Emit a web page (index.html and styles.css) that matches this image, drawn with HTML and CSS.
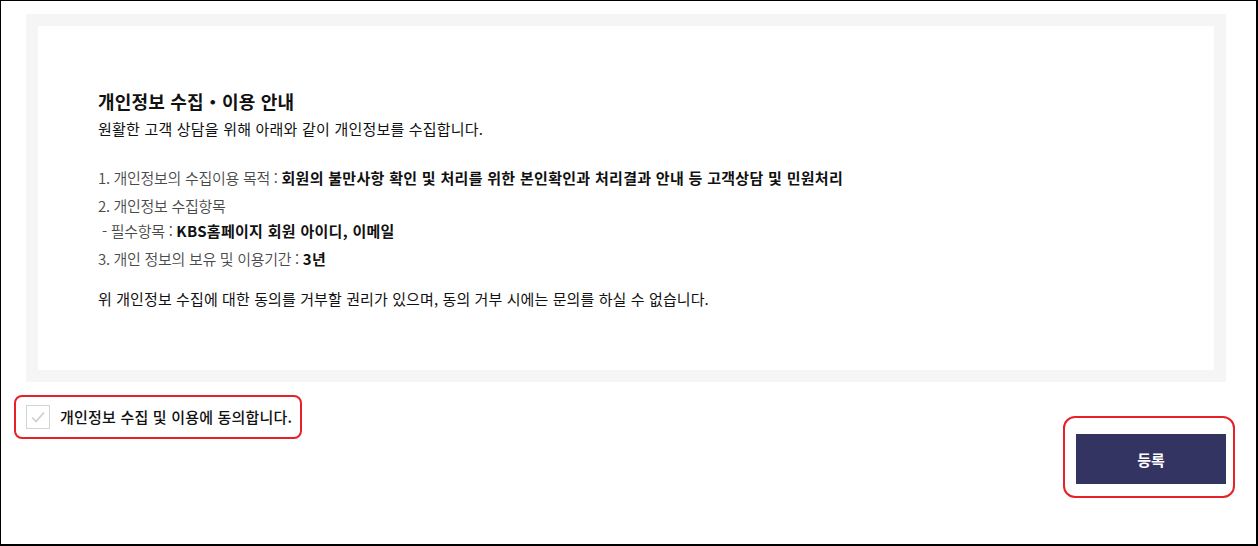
FILE: index.html
```html
<!DOCTYPE html>
<html lang="ko">

<head>
    <meta charset="UTF-8">
    <meta name="viewport" content="width=device-width, initial-scale=1.0">
    <link rel="stylesheet" href="styles.css">
    <title>개인정보 수집 이용 동의</title>
</head>

<body>
    <div class="page">
        <!-- 안내 박스 -->
        <div class="agree-box">
            <div class="agree-inner">
                <h2 class="agree-title">개인정보 수집・이용 안내</h2>
                <p class="agree-sub">원활한 고객 상담을 위해 아래와 같이 개인정보를 수집합니다.</p>

                <ul class="agree-list">
                    <li>1. 개인정보의 수집이용 목적 : <strong>회원의 불만사항 확인 및 처리를 위한 본인확인과 처리결과 안내 등 고객상담 및 민원처리</strong></li>
                    <li>2. 개인정보 수집항목<br><span class="sub-item">- 필수항목 : <strong>KBS홈페이지 회원 아이디, 이메일</strong></span></li>
                    <li>3. 개인 정보의 보유 및 이용기간 : <strong>3년</strong></li>
                </ul>

                <p class="agree-note">위 개인정보 수집에 대한 동의를 거부할 권리가 있으며, 동의 거부 시에는 문의를 하실 수 없습니다.</p>
            </div>
        </div>

        <div class="bottom-row">
            <label class="check-wrap">
                <span class="check-box">
                    <svg width="16" height="16" viewBox="0 0 16 16">
                        <polyline points="2,8.5 6,12.5 14,3.5" fill="none" stroke="#cfcfcf" stroke-width="1.6"/>
                    </svg>
                </span>
                <span class="check-text">개인정보 수집 및 이용에 동의합니다.</span>
            </label>

            <div class="btn-wrap">
                <button type="button" class="btn-submit">등록</button>
            </div>
        </div>
    </div>
</body>

</html>
```

FILE: styles.css
```css
body {
    margin: 0;
    padding: 0;
    background-color: #fff;
    font-family: "Noto Sans CJK KR", "Noto Sans", sans-serif;
    color: #111;
    letter-spacing: 0.2px;
}

.page {
    width: 1258px;
    height: 546px;
    box-sizing: border-box;
    border: 1px solid #000;
    border-right-width: 2px;
    border-bottom-width: 2px;
}

.agree-box {
    margin: 13px 30px 0 25px;
    padding: 12px;
    background-color: #f5f5f5;
}

.agree-inner {
    height: 344px;
    box-sizing: border-box;
    padding: 61px 0 0 60px;
    background-color: #fff;
}

.agree-title {
    margin: 0;
    font-size: 18px;
    font-weight: 700;
    line-height: 28px;
    letter-spacing: 0.2px;
}

.agree-sub {
    margin: 0;
    font-size: 15px;
    line-height: 28px;
}

.agree-list {
    list-style: none;
    margin: 22px 0 0;
    padding: 0;
}

.agree-list li {
    font-size: 15px;
    font-weight: 350;
    line-height: 25px;
    color: #4a4a4a;
    letter-spacing: -0.3px;
}

.agree-list li + li {
    margin-top: 3px;
}

.agree-list strong {
    font-weight: 700;
    color: #111;
    letter-spacing: 0.3px;
}

.sub-item {
    padding-left: 4px;
}

.agree-note {
    margin: 15px 0 0;
    font-size: 15px;
    line-height: 25px;
    letter-spacing: 0.1px;
}

.bottom-row {
    display: flex;
    justify-content: space-between;
    align-items: flex-start;
    padding: 0 21px 0 13px;
}

.check-wrap {
    display: flex;
    align-items: center;
    margin-top: 13px;
    padding: 8px 8px 8px 10px;
    border: 2px solid #e8202a;
    border-radius: 8px;
    cursor: pointer;
}

.check-box {
    display: flex;
    align-items: center;
    justify-content: center;
    width: 24px;
    height: 24px;
    box-sizing: border-box;
    border: 1px solid #d4d4d4;
    background-color: #fff;
}

.check-text {
    margin-left: 10px;
    font-size: 15px;
    font-weight: 500;
    line-height: 24px;
}

.btn-wrap {
    margin-top: 34px;
    padding: 16px 7px 12px 11px;
    border: 2px solid #e8202a;
    border-radius: 12px;
}

.btn-submit {
    display: block;
    width: 150px;
    height: 50px;
    border: none;
    background-color: #343462;
    color: #fff;
    font-family: "Noto Sans CJK KR", sans-serif;
    font-size: 15px;
    font-weight: 700;
    cursor: pointer;
}
```
